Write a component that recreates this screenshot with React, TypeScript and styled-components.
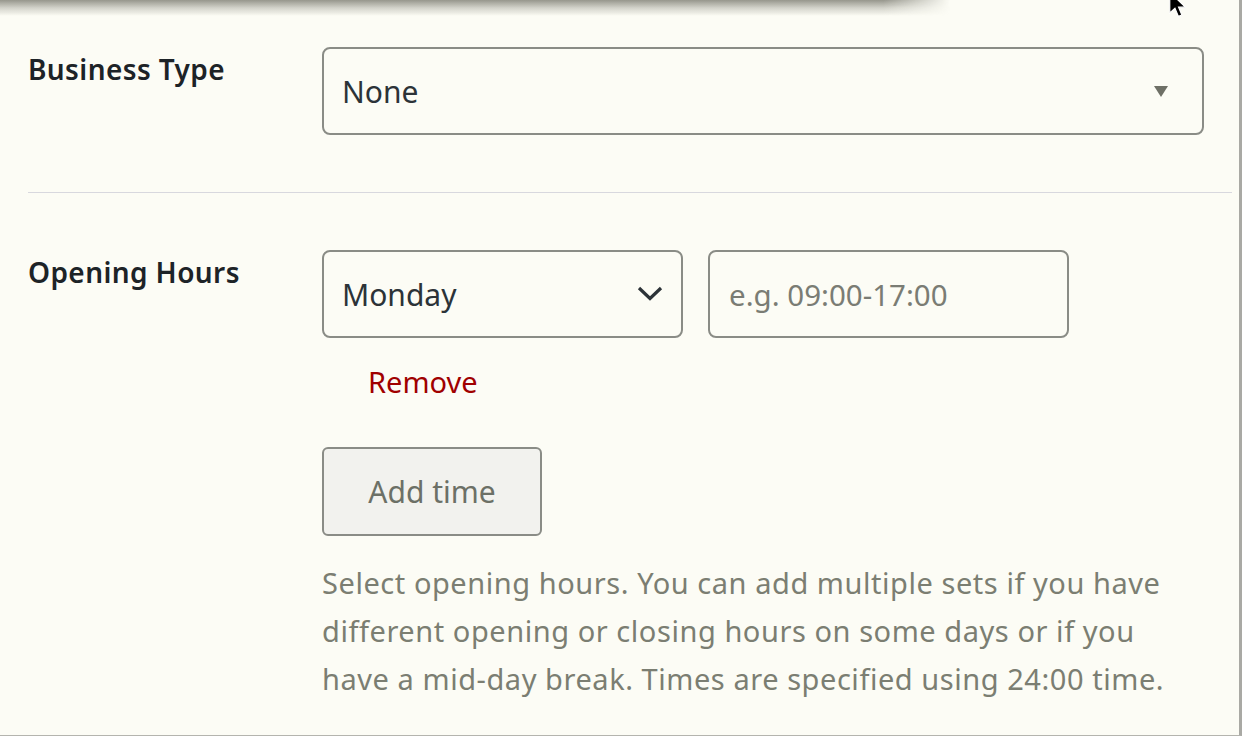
import styled, { createGlobalStyle } from 'styled-components';

const GlobalStyle = createGlobalStyle`
  html, body {
    margin: 0;
    padding: 0;
    background: #fcfcf5;
  }
  body {
    font-family: "Noto Sans", "Open Sans", sans-serif;
  }
`;

const Page = styled.div`
  position: relative;
  width: 1242px;
  height: 736px;
  box-sizing: border-box;
  padding: 47px 0 0 28px;
  background: #fcfcf5;
  border-right: 3px solid #a9a9a4;
  border-bottom: 1px solid #b4b4ae;
  overflow: hidden;
`;

const TopShadow = styled.div`
  position: absolute;
  top: 0;
  left: 0;
  width: 950px;
  height: 16px;
  background: linear-gradient(to bottom, rgba(125, 125, 115, 0.8), rgba(150, 150, 140, 0.4) 50%, rgba(170, 170, 160, 0));
  -webkit-mask-image: linear-gradient(to right, #000 93%, transparent);
  mask-image: linear-gradient(to right, #000 93%, transparent);
`;

const Cursor = styled.svg`
  position: absolute;
  top: -9px;
  left: 1167px;
`;

const Row = styled.div`
  display: grid;
  grid-template-columns: 294px 882px;
  align-items: start;
`;

const Label = styled.div`
  font-size: 28px;
  font-weight: 600;
  line-height: 36px;
  color: #1d2327;
  padding-top: 4px;
  letter-spacing: 0.4px;
`;

const Field = styled.div`
  display: flex;
  flex-direction: column;
  align-items: flex-start;
`;

const SelectBox = styled.div<{ $width?: number }>`
  box-sizing: border-box;
  width: ${p => (p.$width ? `${p.$width}px` : '100%')};
  height: 88px;
  border: 2px solid #8a8c86;
  border-radius: 8px;
  display: flex;
  align-items: center;
  justify-content: space-between;
  padding: 0 26px 0 18px;
  font-size: 30px;
  color: #2c3338;
`;

const Caret = styled.span`
  width: 0;
  height: 0;
  border-left: 7px solid transparent;
  border-right: 7px solid transparent;
  border-top: 11px solid #6e7066;
  margin-right: 8px;
`;

const Chevron = styled.svg`
  margin-right: -10px;
`;

const TimeInput = styled.div`
  box-sizing: border-box;
  width: 361px;
  height: 88px;
  border: 2px solid #8a8c86;
  border-radius: 8px;
  display: flex;
  align-items: center;
  padding: 0 19px;
  font-size: 29.5px;
  color: #7a7c74;
`;

const Divider = styled.hr`
  border: none;
  border-top: 1px solid #d8d8de;
  margin: 57px 7px 57px 0;
`;

const TimeRow = styled.div`
  display: flex;
  gap: 25px;
`;

const RemoveLink = styled.a`
  margin: 24px 0 0 46px;
  font-size: 29px;
  line-height: 40px;
  color: #a00000;
  text-decoration: none;
`;

const AddButton = styled.button`
  box-sizing: border-box;
  margin-top: 45px;
  width: 220px;
  height: 89px;
  border: 2px solid #8a8c86;
  border-radius: 6px;
  background: #f2f2ee;
  font-family: inherit;
  font-size: 30px;
  color: #6c7066;
`;

const Description = styled.p`
  margin: 23px 0 0;
  width: 870px;
  font-size: 29px;
  line-height: 48px;
  color: #7b7e72;
  letter-spacing: 0.55px;
`;

function App() {
  return (
    <>
      <GlobalStyle />
      <Page>
        <TopShadow />
        <Cursor width="24" height="30" viewBox="0 0 20 26">
          <path d="M2 1 L2 19 L6.5 15 L9.5 22 L12.5 20.8 L9.6 14 L15.5 14 Z" fill="#000" stroke="#fff" strokeWidth="1" />
        </Cursor>

        <Row>
          <Label>Business Type</Label>
          <SelectBox>
            <span>None</span>
            <Caret />
          </SelectBox>
        </Row>

        <Divider />

        <Row>
          <Label>Opening Hours</Label>
          <Field>
            <TimeRow>
              <SelectBox $width={361}>
                <span>Monday</span>
                <Chevron width="30" height="18" viewBox="0 0 30 18">
                  <path d="M4 3 L15 13.5 L26 3" fill="none" stroke="#2c3338" strokeWidth="3.2" />
                </Chevron>
              </SelectBox>
              <TimeInput>e.g. 09:00-17:00</TimeInput>
            </TimeRow>
            <RemoveLink href="#">Remove</RemoveLink>
            <AddButton type="button">Add time</AddButton>
            <Description>
              Select opening hours. You can add multiple sets if you have different opening or closing
              hours on some days or if you have a mid-day break. Times are specified using 24:00 time.
            </Description>
          </Field>
        </Row>
      </Page>
    </>
  );
}

export default App;
